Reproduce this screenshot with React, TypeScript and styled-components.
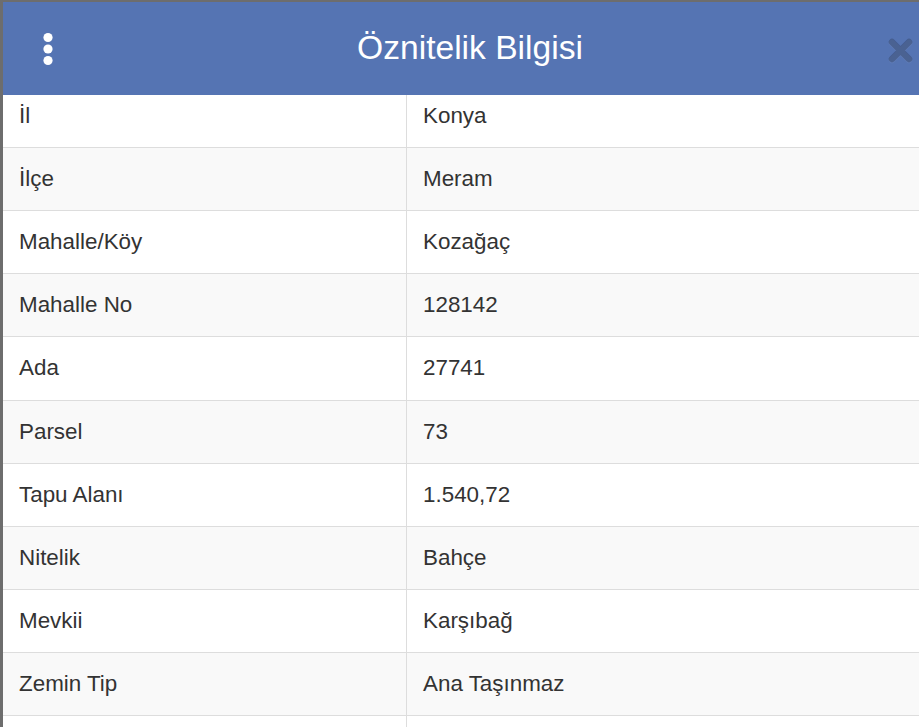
import React from "react";
import styled, { createGlobalStyle } from "styled-components";

const GlobalStyle = createGlobalStyle`
  html, body {
    margin: 0;
    padding: 0;
    height: 100%;
    overflow: hidden;
    background: #6d6d6d;
    font-family: "Liberation Sans", Arial, sans-serif;
  }
  #root {
    height: 100%;
  }
`;

const Backdrop = styled.div`
  height: 100%;
  padding: 2px 0 0 3px;
  box-sizing: border-box;
  overflow: hidden;
`;

const Dialog = styled.div`
  width: 934px;
  height: 100%;
  background: #fff;
  display: flex;
  flex-direction: column;
`;

const Header = styled.div`
  height: 93px;
  flex-shrink: 0;
  background: #5574b3;
  display: grid;
  grid-template-columns: 90px 1fr 90px;
  align-items: center;
  position: relative;
  z-index: 1;
`;

const MenuButton = styled.button`
  border: 0;
  background: transparent;
  padding: 0;
  width: 90px;
  height: 93px;
  display: flex;
  align-items: center;
  justify-content: center;
  cursor: pointer;
`;

const Title = styled.h4`
  margin: 0;
  text-align: center;
  color: #fff;
  font-weight: 400;
  font-size: 33.6px;
  line-height: 1;
  padding-bottom: 2px;
`;

const CloseButton = styled.button`
  border: 0;
  background: transparent;
  padding: 0;
  height: 93px;
  display: flex;
  align-items: center;
  justify-content: flex-start;
  cursor: pointer;
  svg {
    margin-left: 41px;
    margin-top: 4px;
    filter: drop-shadow(0 1px 0 rgba(255, 255, 255, 0.25));
  }
`;

const Body = styled.div`
  flex: 1;
  overflow: hidden;
`;

const Table = styled.div`
  margin-top: -10.4px;
  display: grid;
  grid-template-columns: 403px 1fr;
`;

const Cell = styled.div<{ $striped: boolean; $value?: boolean }>`
  height: 63.2px;
  box-sizing: border-box;
  border-bottom: 1px solid #dddddd;
  border-left: ${({ $value }) => ($value ? "1px solid #dddddd" : "0")};
  background: ${({ $striped }) => ($striped ? "#f9f9f9" : "#ffffff")};
  padding: 0 16px;
  display: flex;
  align-items: center;
  color: #333333;
  font-size: 22.4px;
  white-space: nowrap;
`;

const EllipsisIcon = () => (
  <svg width="12" height="36" viewBox="0 0 12 36">
    <circle cx="6" cy="6.5" r="4.6" fill="#fff" />
    <circle cx="6" cy="18" r="4.6" fill="#fff" />
    <circle cx="6" cy="29.5" r="4.6" fill="#fff" />
  </svg>
);

const CloseIcon = () => (
  <svg width="25" height="25" viewBox="0 0 25 25">
    <path
      d="M4 4 L21 21 M21 4 L4 21"
      stroke="rgba(0,0,0,0.2)"
      strokeWidth="6.5"
      strokeLinecap="round"
      fill="none"
    />
  </svg>
);

const rows: [string, string][] = [
  ["İl", "Konya"],
  ["İlçe", "Meram"],
  ["Mahalle/Köy", "Kozağaç"],
  ["Mahalle No", "128142"],
  ["Ada", "27741"],
  ["Parsel", "73"],
  ["Tapu Alanı", "1.540,72"],
  ["Nitelik", "Bahçe"],
  ["Mevkii", "Karşıbağ"],
  ["Zemin Tip", "Ana Taşınmaz"],
  ["", ""],
];

const App: React.FC = () => {
  return (
    <>
      <GlobalStyle />
      <Backdrop>
        <Dialog>
          <Header>
            <MenuButton aria-label="menu">
              <EllipsisIcon />
            </MenuButton>
            <Title>Öznitelik Bilgisi</Title>
            <CloseButton aria-label="close">
              <CloseIcon />
            </CloseButton>
          </Header>
          <Body>
            <Table>
              {rows.map(([key, value], i) => (
                <React.Fragment key={i}>
                  <Cell $striped={i % 2 === 1}>{key}</Cell>
                  <Cell $striped={i % 2 === 1} $value>
                    {value}
                  </Cell>
                </React.Fragment>
              ))}
            </Table>
          </Body>
        </Dialog>
      </Backdrop>
    </>
  );
};

export default App;
